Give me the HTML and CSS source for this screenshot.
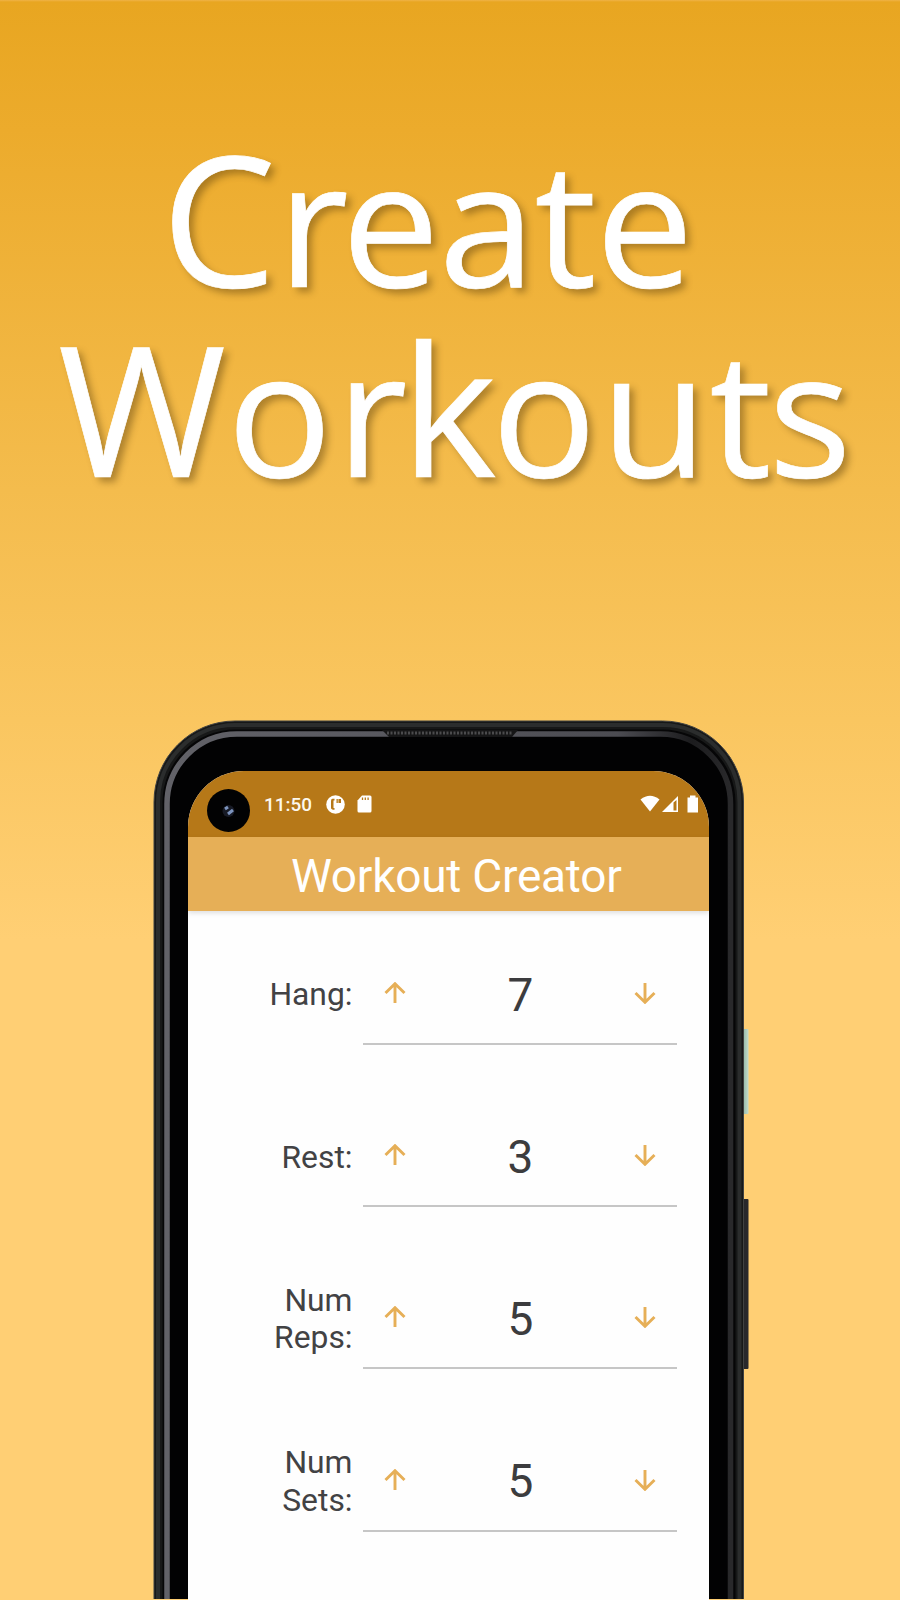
FILE: index.html
```html
<!DOCTYPE html>
<html lang="en">
<head>
<meta charset="utf-8">
<title>Create Workouts</title>
<link rel="stylesheet" href="styles.css">
</head>
<body>
<main class="poster">
  <h1 class="headline"><span class="line line-create"><span class="cap">C</span><span class="tight">r</span>eate</span><span class="line line-workouts"><span class="cap">W</span><span class="wide">o</span><span class="tight">r</span><span class="tall">k</span><span class="wide">o</span><span class="open">u</span>ts</span></h1>
  <section class="phone">
    <svg class="frame" width="600" height="880" viewBox="0 0 600 880" aria-hidden="true">
      <defs>
        <linearGradient id="rim" x1="0" x2="1" y1="0" y2="0">
          <stop offset="0" stop-color="#626268"/><stop offset=".3" stop-color="#5b5b62"/><stop offset=".8" stop-color="#4c4c52"/><stop offset=".93" stop-color="#1c1c1e"/><stop offset="1" stop-color="#29292b"/>
        </linearGradient>
        <linearGradient id="power" x1="0" x2="1" y1="0" y2="0">
          <stop offset="0" stop-color="#6f9c8c"/><stop offset="1" stop-color="#c4dccb"/>
        </linearGradient>
      </defs>
      <rect x="589" y="310" width="9.500" height="85" rx="1" fill="url(#power)"/>
      <rect x="589" y="480" width="9.500" height="170" rx="1" fill="#28282b"/>
      <rect x="4" y="2" width="589.500" height="1000" rx="81" fill="#171818" stroke="#414241"/>
      <rect x="8" y="6" width="581.500" height="1000" rx="77" fill="none" stroke="#2b2d2d" stroke-width="4"/>
      <rect x="12.500" y="10.500" width="573" height="1000" rx="73" fill="#060607"/>
      <rect x="17" y="15" width="563.500" height="1000" rx="70" fill="#020203" stroke="url(#rim)" stroke-width="5.500"/>
      <path d="M232 11H368L362 18H239Z" fill="#161617"/>
      <path d="M237 14H363" stroke="#4b4b4d" stroke-width="3" stroke-dasharray="2 1.500"/>
    </svg>
    <div class="screen">
      <header class="status">
        <svg class="camera" width="43" height="43" viewBox="0 0 43 43"><circle cx="21.500" cy="21.500" r="21.500" fill="#020203"/><circle cx="21.500" cy="22" r="6" fill="#171a25"/><path d="M18 20l3-2M21 25l5-4" stroke="#7c93bd" stroke-width="3"/></svg>
        <span class="clock">11:50</span>
        <svg class="icon-app" width="19" height="19" viewBox="0 0 19 19"><circle cx="9.500" cy="9.500" r="9.300" fill="#fff"/><path d="M8.500 3.800H6.500Q5 3.800 5 6V13Q5 14.800 8.500 14.800V13H7.500V5.500H8.500Z" fill="#b67818"/><path d="M10.500 4H15V8H10.500Z" fill="#b67818"/><path d="M12.200 4V8" stroke="#e6cda5"/></svg>
        <svg class="icon-card" width="15" height="18" viewBox="0 0 15 18"><path d="M5 .5H13Q14.500.5 14.500 2V16Q14.500 17.500 13 17.500H2Q.5 17.500.5 16V5.500Z" fill="#fff"/><path d="M5.500 2.500V5M8.300 2.500V5M11.100 2.500V5" stroke="#b67818" stroke-width="1.300"/></svg>
        <svg class="icon-signals" width="60" height="18" viewBox="0 0 60 18"><path d="M.5 4.500Q10 -3 19.500 4.500L10 16.500Z" fill="#fff"/><path d="M22 17L38 1V17Z" fill="#fff"/><path d="M33.500 7.500L36.500 5V15.500H33.500Z" fill="#b67818"/><path d="M47.500 2.500H50V.5H55.500V2.500H58V17.500H47.500Z" fill="#fff"/></svg>
      </header>
      <div class="appbar">Workout Creator</div>
      <div class="rows">
        <div class="row"><label class="label">Hang:</label><div class="stepper"><svg class="arrow" viewBox="0 0 22 22"><path d="M11 21V2M1.500 11L11 1.700L20.500 11"/></svg><output class="value">7</output><svg class="arrow" viewBox="0 0 22 22"><path d="M11 1V20M1.500 11L11 20.300L20.500 11"/></svg></div></div>
        <div class="row"><label class="label">Rest:</label><div class="stepper"><svg class="arrow" viewBox="0 0 22 22"><path d="M11 21V2M1.500 11L11 1.700L20.500 11"/></svg><output class="value">3</output><svg class="arrow" viewBox="0 0 22 22"><path d="M11 1V20M1.500 11L11 20.300L20.500 11"/></svg></div></div>
        <div class="row"><label class="label">Num<br>Reps:</label><div class="stepper"><svg class="arrow" viewBox="0 0 22 22"><path d="M11 21V2M1.500 11L11 1.700L20.500 11"/></svg><output class="value">5</output><svg class="arrow" viewBox="0 0 22 22"><path d="M11 1V20M1.500 11L11 20.300L20.500 11"/></svg></div></div>
        <div class="row"><label class="label">Num<br>Sets:</label><div class="stepper"><svg class="arrow" viewBox="0 0 22 22"><path d="M11 21V2M1.500 11L11 1.700L20.500 11"/></svg><output class="value">5</output><svg class="arrow" viewBox="0 0 22 22"><path d="M11 1V20M1.500 11L11 20.300L20.500 11"/></svg></div></div>
      </div>
    </div>
  </section>
</main>
</body>
</html>
```
FILE: styles.css
```css
* { box-sizing: border-box; }
body { margin: 0; }
.poster {
  width: 900px;
  height: 1600px;
  overflow: hidden;
  display: flex;
  flex-direction: column;
  background: linear-gradient(#efb347 0, #e8a621 2px, #ecab2c 130px, #f4bc4d 490px, #fac660 720px, #ffcf74 940px);
}
.headline {
  margin: 0;
  height: 719px;
  flex: none;
  padding-top: 125px;
  color: #fff;
  font: 400 174px/190px "Open Sans", "Noto Sans", sans-serif;
  -webkit-text-stroke: .7px #fff;
  text-shadow: 5px 5px 7px rgba(80, 55, 10, .42);
  white-space: nowrap;
}
.line { display: block; height: 190px; letter-spacing: -.8px; }
.line-create { padding-left: 161.500px; }
.line-workouts { padding-left: 58px; letter-spacing: -3px; }
.cap { font-size: 182px; line-height: 1; letter-spacing: 1.300px; }
.tall { font-size: 182px; line-height: 1; letter-spacing: -4.500px; }
.wide { letter-spacing: 4.300px; }
.open { letter-spacing: 2px; }
.tight { letter-spacing: -6.800px; }
.phone {
  position: relative;
  flex: none;
  width: 600px;
  height: 881px;
  margin-left: 150px;
  padding: 52px 41px 0 38px;
}
.frame { position: absolute; left: 0; top: 0; }
.screen {
  position: relative;
  height: 829px;
  background: #fefefe;
  border-radius: 56px 56px 0 0;
  overflow: hidden;
  font-family: Roboto, sans-serif;
}
.status {
  height: 65.500px;
  background: #b67818;
  display: flex;
  align-items: flex-start;
  color: #fff;
}
.camera { margin: 18px 0 0 19px; }
.clock { margin: 22px 0 0 14px; width: 48px; font: 500 18.900px/23px Roboto, sans-serif; color: #fdf8ee; }
.icon-app { margin: 24px 0 0 14px; }
.icon-card { margin: 24px 0 0 12px; }
.icon-signals { margin: 24px 9px 0 auto; }
.appbar {
  position: relative;
  height: 74.500px;
  background: #e6af57;
  box-shadow: 0 2px 5px rgba(0, 0, 0, .13);
  color: #fff;
  font-size: 46px;
  letter-spacing: -.25px;
  line-height: 79px;
  padding-left: 103px;
  white-space: nowrap;
}
.rows { padding-top: 2px; }
.row {
  height: 162.200px;
  display: flex;
  align-items: center;
}
.label {
  width: 164.500px;
  padding-top: 2px;
  text-align: right;
  font-size: 31.800px;
  line-height: 37.500px;
  color: #424244;
}
.stepper {
  width: 314px;
  height: 102px;
  margin-left: 10.500px;
  border-bottom: 2.500px solid #c6c6c6;
  display: flex;
  align-items: center;
  justify-content: space-between;
  padding: 0 21px;
}
.arrow { width: 22px; height: 22px; fill: none; stroke: #e6af57; stroke-width: 2.900; }
.value { font-size: 46px; line-height: 54px; padding: 3px 0 0 1px; color: #3c3c3e; }
```
